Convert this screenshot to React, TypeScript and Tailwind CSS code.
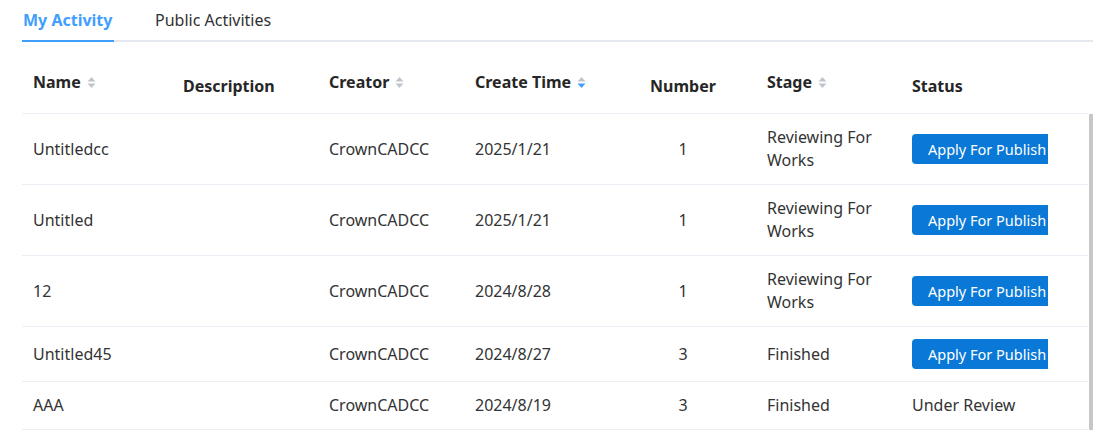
import React from "react";

type Row = {
  name: string;
  creator: string;
  time: string;
  number: number;
  stage: string;
  status: "apply" | "review";
  h: string;
};

const rows: Row[] = [
  { name: "Untitledcc", creator: "CrownCADCC", time: "2025/1/21", number: 1, stage: "Reviewing For Works", status: "apply", h: "h-[71px]" },
  { name: "Untitled", creator: "CrownCADCC", time: "2025/1/21", number: 1, stage: "Reviewing For Works", status: "apply", h: "h-[71px]" },
  { name: "12", creator: "CrownCADCC", time: "2024/8/28", number: 1, stage: "Reviewing For Works", status: "apply", h: "h-[71px]" },
  { name: "Untitled45", creator: "CrownCADCC", time: "2024/8/27", number: 3, stage: "Finished", status: "apply", h: "h-[55px]" },
  { name: "AAA", creator: "CrownCADCC", time: "2024/8/19", number: 3, stage: "Finished", status: "review", h: "h-[48px]" },
];

const cols = "grid grid-cols-[150px_146px_146px_146px_146px_145px_1fr]";

function SortCaret({ active }: { active?: boolean }) {
  return (
    <svg width="9" height="13" viewBox="0 0 9 13" className="ml-[6px] mt-[1px]">
      <path d="M4.5 1 L8.5 5.5 L0.5 5.5 Z" fill="#c0c4cc" />
      <path d="M4.5 12 L8.5 7.5 L0.5 7.5 Z" fill={active ? "#409eff" : "#c0c4cc"} />
    </svg>
  );
}

function Head({ label, sort, active, center }: { label: string; sort?: boolean; active?: boolean; center?: boolean }) {
  return (
    <div
      className={`flex h-full items-center ${center ? "justify-center" : "pl-[11px]"} ${
        sort ? "pt-[8px]" : "pt-[16px]"
      }`}
    >
      <span className="font-bold text-[16px] text-[#262626]">{label}</span>
      {sort && <SortCaret active={active} />}
    </div>
  );
}

export default function App() {
  return (
    <div className="w-[1106px] h-[431px] overflow-hidden bg-white font-['Noto_Sans','Liberation_Sans',sans-serif]">
      <div className="ml-[22px] mr-[13px]">
        {/* Tabs */}
        <div className="flex h-[42px] border-b-2 border-[#e4e7ed]">
          <div className="relative w-[92px] pl-[1px] pt-[8px] whitespace-nowrap text-[16px] font-bold text-[#409eff] leading-[24px]">
            My Activity
            <div className="absolute left-0 right-0 -bottom-[2px] h-[2px] bg-[#409eff]" />
          </div>
          <div className="ml-[41px] pt-[8px] whitespace-nowrap text-[16px] leading-[24px] text-[#303133]">
            Public Activities
          </div>
        </div>

        {/* Table */}
        <div className={`${cols} h-[72px] border-b border-[#ebeef5] mr-[5px]`}>
          <Head label="Name" sort />
          <Head label="Description" />
          <Head label="Creator" sort />
          <Head label="Create Time" sort active />
          <Head label="Number" center />
          <Head label="Stage" sort />
          <Head label="Status" />
        </div>

        <div className="flex">
          <div className="flex-1">
            {rows.map((r) => (
              <div
                key={r.name}
                className={`${cols} ${r.h} items-center border-b border-[#ebeef5] text-[16px] text-[#333333] leading-[23px]`}
              >
                <div className="pl-[11px]">{r.name}</div>
                <div className="pl-[11px]" />
                <div className="pl-[11px]">{r.creator}</div>
                <div className="pl-[11px]">{r.time}</div>
                <div className="text-center">{r.number}</div>
                <div className="pl-[11px] pr-[14px]">{r.stage}</div>
                <div className="pl-[11px]">
                  {r.status === "apply" ? (
                    <div className="w-[136px] h-[30px] overflow-hidden rounded-l-[4px] bg-[#0a78d7] pl-[16px] text-[14.5px] leading-[30px] whitespace-nowrap text-white">
                      Apply For Publish
                    </div>
                  ) : (
                    <span>Under Review</span>
                  )}
                </div>
              </div>
            ))}
          </div>
          <div className="w-[4px] ml-[1px] bg-[#c7c7c7]" />
        </div>
      </div>
    </div>
  );
}
